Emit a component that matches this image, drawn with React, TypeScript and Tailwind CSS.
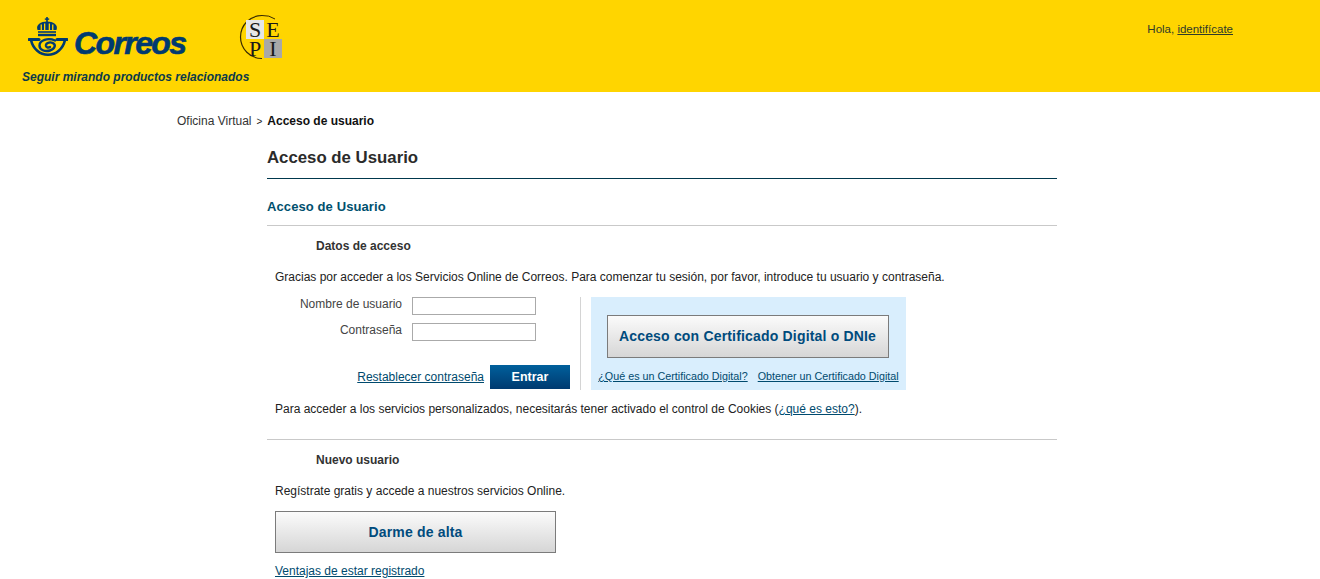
import { ReactNode } from "react";

function CorreosMark() {
  return (
    <svg width="40" height="40" viewBox="0 0 40 40" className="shrink-0">
      {/* corona */}
      <g fill="#003a70">
        <rect x="18.2" y="0" width="1.6" height="5" />
        <rect x="16.8" y="1.4" width="4.4" height="1.4" />
        <path d="M9.5 13 C7.5 7.5 13 4.5 19 4.5 C25 4.5 30.5 7.5 28.5 13 Z" />
        <rect x="10" y="14.2" width="18" height="1.6" />
        <rect x="10" y="16.8" width="18" height="2.4" />
      </g>
      <g fill="#ffd500">
        <rect x="12.6" y="7.5" width="1.3" height="5.5" />
        <rect x="16" y="6.5" width="1.3" height="6.5" />
        <rect x="20.7" y="6.5" width="1.3" height="6.5" />
        <rect x="24.1" y="7.5" width="1.3" height="5.5" />
      </g>
      {/* corneta */}
      <g fill="none" stroke="#003a70" strokeLinecap="round">
        <path d="M1 22.5 H11" strokeWidth="3" />
        <path d="M29 22.5 H39" strokeWidth="3" />
        <path d="M3 23 C5 32 12 37.8 20 37.8 C28 37.8 35 32 37 23" strokeWidth="2.6" />
        <path d="M27 23.5 C20 20.5 11.5 23 11.5 28.5 C11.5 33 17 35 22 33.5 C27 32 28.5 27.5 24.5 25.8 C21 24.5 17.5 26.5 18 29 C18.4 30.6 20.6 31 22 30" strokeWidth="2.4" />
      </g>
    </svg>
  );
}

function SepiLogo() {
  return (
    <div className="relative w-[46px] h-[46px] font-['Liberation_Serif',serif] text-[#1a1a1a]">
      <svg width="46" height="46" viewBox="0 0 46 46" className="absolute inset-0">
        <path d="M23 1.5 A21 21 0 0 0 23 44.5" fill="none" stroke="#3a2c00" strokeWidth="1.2" />
        <path d="M23 1.5 A21 21 0 0 1 36 5" fill="none" stroke="#3a2c00" strokeWidth="1" />
      </svg>
      <div className="absolute left-[7px] top-[6px] grid grid-cols-[18px_18px] grid-rows-[19px_19px] text-[22px] leading-[19px] text-center">
        <span className="bg-[#e6e6e8]">S</span>
        <span>E</span>
        <span>P</span>
        <span className="bg-[#a8a8a8]">I</span>
      </div>
    </div>
  );
}

function A({ children, className = "" }: { children: ReactNode; className?: string }) {
  return <a className={`underline text-[#004a6e] cursor-pointer ${className}`}>{children}</a>;
}

function GrayButton({ children, className = "" }: { children: ReactNode; className?: string }) {
  return (
    <button className={`border border-[#7b7b7b] bg-gradient-to-b from-[#fbfbfb] to-[#d6d6d6] text-[#004b7d] font-bold text-[14px] tracking-[0.18px] ${className}`}>
      {children}
    </button>
  );
}

export default function App() {
  return (
    <div className="w-[1320px] h-[579px] overflow-hidden bg-white font-['Liberation_Sans',Arial,sans-serif] text-[12px] text-[#222]">
      <header className="h-[92px] bg-[#ffd500] flex justify-between pl-[22px] pr-[87px]">
        <div>
          <div className="flex items-start pt-[14px] h-[70px]">
            <div className="flex items-end pl-[6px] w-[217px] pt-[3px]">
              <CorreosMark />
              <span className="ml-[6px] mb-[-4px] text-[32px] leading-[36px] font-bold italic tracking-[-1.6px] text-[#003a70] [-webkit-text-stroke:0.6px_#003a70]">Correos</span>
            </div>
            <SepiLogo />
          </div>
          <p className="text-[12px] leading-[14px] font-bold italic text-[#0b3a4a]">Seguir mirando productos relacionados</p>
        </div>
        <div className="pt-[21px] text-[11.5px] text-[#2f3a2a]">
          Hola, <a className="underline">identifícate</a>
        </div>
      </header>

      <nav className="pl-[177px] pt-[20px] h-[50px]">
        <span className="text-[#333]">Oficina Virtual</span>
        <span className="mx-[5px] text-[10px]">&gt;</span>
        <strong className="text-[#111]">Acceso de usuario</strong>
      </nav>

      <main className="ml-[267px] w-[790px]">
        <h1 className="text-[16.8px] font-bold text-[#2b2b2b] h-[37px] pt-[7px] border-b border-[#00384d] leading-[18px]">Acceso de Usuario</h1>
        <h2 className="text-[13px] font-bold text-[#00506e] h-[47px] pt-[19px] border-b border-[#c9c9c9] leading-[18px] tracking-[0.1px]">Acceso de Usuario</h2>

        <h3 className="pl-[49px] pt-[11px] h-[40px] font-bold text-[#333]">Datos de acceso</h3>
        <p className="pl-[8px] h-[21px] pt-[2px] text-[#222]">
          Gracias por acceder a los Servicios Online de Correos. Para comenzar tu sesión, por favor, introduce tu usuario y contraseña.
        </p>

        <div className="flex h-[93px] mt-[10px]">
          <div className="w-[314px] border-r border-[#d4d4d4] flex flex-col pr-[10px]">
            <div className="flex items-center justify-end h-[20px] mt-[-1px] pr-[34px]">
              <label className="text-[#444] mr-[10px] leading-[16px] mb-[4px]">Nombre de usuario</label>
              <input className="w-[124px] h-[18px] border border-[#aaa] bg-white" />
            </div>
            <div className="flex items-center justify-end h-[20px] mt-[6px] pr-[34px]">
              <label className="text-[#444] mr-[10px] leading-[16px] mb-[4px]">Contraseña</label>
              <input className="w-[124px] h-[18px] border border-[#aaa] bg-white" />
            </div>
            <div className="flex items-center justify-end mt-[23px]">
              <A className="mr-[6px]">Restablecer contraseña</A>
              <button className="w-[80px] h-[24px] bg-gradient-to-b from-[#00609c] to-[#003a70] text-white font-bold text-[12.5px]">Entrar</button>
            </div>
          </div>
          <div className="ml-[10px] w-[315px] bg-[#d9eefd] flex flex-col items-center">
            <GrayButton className="mt-[18px] w-[282px] h-[43px] mr-[2px]">Acceso con Certificado Digital o DNIe</GrayButton>
            <div className="mt-[10px] flex gap-[10px] text-[10.75px]">
              <A>¿Qué es un Certificado Digital?</A>
              <A>Obtener un Certificado Digital</A>
            </div>
          </div>
        </div>

        <p className="pl-[8px] pt-[10px] h-[50px] border-b border-[#c9c9c9]">
          Para acceder a los servicios personalizados, necesitarás tener activado el control de Cookies (<A>¿qué es esto?</A>).
        </p>

        <h3 className="pl-[49px] pt-[11px] h-[41px] font-bold text-[#333]">Nuevo usuario</h3>
        <p className="pl-[8px] pt-[1px] h-[30px]">Regístrate gratis y accede a nuestros servicios Online.</p>
        <div className="pl-[8px]">
          <GrayButton className="w-[281px] h-[42px]">Darme de alta</GrayButton>
        </div>
        <div className="pl-[8px] pt-[9px]">
          <A>Ventajas de estar registrado</A>
        </div>
      </main>
    </div>
  );
}
